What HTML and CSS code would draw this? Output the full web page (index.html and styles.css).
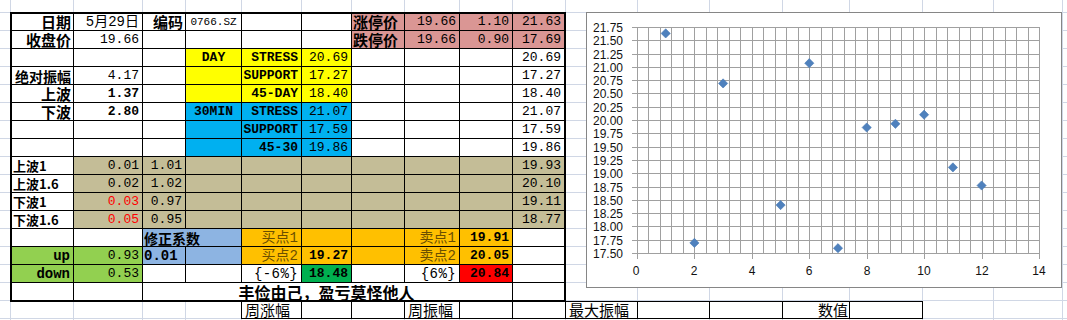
FILE: index.html
```html
<!DOCTYPE html>
<html lang="zh-CN">
<head>
<meta charset="utf-8">
<title>5月29日 0766.SZ</title>
<link rel="stylesheet" href="styles.css">
</head>
<body>
<div class="page">
  <div class="sheet">
    <div class="tbl">
      <!-- row 1 -->
      <div class="c lbl">日期</div>
      <div class="c date">5月29日</div>
      <div class="c lbl">编码</div>
      <div class="c code">0766.SZ</div>
      <div class="c"></div>
      <div class="c"></div>
      <div class="c lbl l pk">涨停价</div>
      <div class="c pk">19.66</div>
      <div class="c pk">1.10</div>
      <div class="c pk">21.63</div>
      <!-- row 2 -->
      <div class="c lbl">收盘价</div>
      <div class="c">19.66</div>
      <div class="c"></div>
      <div class="c"></div>
      <div class="c"></div>
      <div class="c"></div>
      <div class="c lbl l pk">跌停价</div>
      <div class="c pk">19.66</div>
      <div class="c pk">0.90</div>
      <div class="c pk">17.69</div>
      <!-- row 3 -->
      <div class="c"></div>
      <div class="c"></div>
      <div class="c"></div>
      <div class="c b ctr yl">DAY</div>
      <div class="c b yl">STRESS</div>
      <div class="c yl">20.69</div>
      <div class="c"></div>
      <div class="c"></div>
      <div class="c"></div>
      <div class="c">20.69</div>
      <!-- row 4 -->
      <div class="c lbl sm14">绝对振幅</div>
      <div class="c">4.17</div>
      <div class="c"></div>
      <div class="c yl"></div>
      <div class="c b yl">SUPPORT</div>
      <div class="c yl">17.27</div>
      <div class="c"></div>
      <div class="c"></div>
      <div class="c"></div>
      <div class="c">17.27</div>
      <!-- row 5 -->
      <div class="c lbl">上波</div>
      <div class="c b">1.37</div>
      <div class="c"></div>
      <div class="c yl"></div>
      <div class="c b yl">45-DAY</div>
      <div class="c yl">18.40</div>
      <div class="c"></div>
      <div class="c"></div>
      <div class="c"></div>
      <div class="c">18.40</div>
      <!-- row 6 -->
      <div class="c lbl">下波</div>
      <div class="c b">2.80</div>
      <div class="c"></div>
      <div class="c b ctr bl">30MIN</div>
      <div class="c b bl">STRESS</div>
      <div class="c bl">21.07</div>
      <div class="c"></div>
      <div class="c"></div>
      <div class="c"></div>
      <div class="c">21.07</div>
      <!-- row 7 -->
      <div class="c"></div>
      <div class="c"></div>
      <div class="c"></div>
      <div class="c bl"></div>
      <div class="c b bl">SUPPORT</div>
      <div class="c bl">17.59</div>
      <div class="c"></div>
      <div class="c"></div>
      <div class="c"></div>
      <div class="c">17.59</div>
      <!-- row 8 -->
      <div class="c"></div>
      <div class="c"></div>
      <div class="c"></div>
      <div class="c bl"></div>
      <div class="c b bl">45-30</div>
      <div class="c bl">19.86</div>
      <div class="c"></div>
      <div class="c"></div>
      <div class="c"></div>
      <div class="c">19.86</div>
      <!-- row 9 -->
      <div class="c lbl small l">上波1</div>
      <div class="c tn">0.01</div>
      <div class="c tn">1.01</div>
      <div class="c tn"></div>
      <div class="c tn"></div>
      <div class="c tn"></div>
      <div class="c tn"></div>
      <div class="c tn"></div>
      <div class="c tn"></div>
      <div class="c tn">19.93</div>
      <!-- row 10 -->
      <div class="c lbl small l">上波1.6</div>
      <div class="c tn">0.02</div>
      <div class="c tn">1.02</div>
      <div class="c tn"></div>
      <div class="c tn"></div>
      <div class="c tn"></div>
      <div class="c tn"></div>
      <div class="c tn"></div>
      <div class="c tn"></div>
      <div class="c tn">20.10</div>
      <!-- row 11 -->
      <div class="c lbl small l">下波1</div>
      <div class="c tn red-t">0.03</div>
      <div class="c tn">0.97</div>
      <div class="c tn"></div>
      <div class="c tn"></div>
      <div class="c tn"></div>
      <div class="c tn"></div>
      <div class="c tn"></div>
      <div class="c tn"></div>
      <div class="c tn">19.11</div>
      <!-- row 12 -->
      <div class="c lbl small l">下波1.6</div>
      <div class="c tn red-t">0.05</div>
      <div class="c tn">0.95</div>
      <div class="c tn"></div>
      <div class="c tn"></div>
      <div class="c tn"></div>
      <div class="c tn"></div>
      <div class="c tn"></div>
      <div class="c tn"></div>
      <div class="c tn">18.77</div>
      <!-- row 13 -->
      <div class="c"></div>
      <div class="c"></div>
      <div class="c lbl sm14 l lb span2">修正系数</div>
      <div class="c cjk or brn">买点1</div>
      <div class="c or"></div>
      <div class="c or"></div>
      <div class="c cjk or brn">卖点1</div>
      <div class="c b or">19.91</div>
      <div class="c"></div>
      <!-- row 14 -->
      <div class="c b big gr">up</div>
      <div class="c gr">0.93</div>
      <div class="c b big l lb">0.01</div>
      <div class="c lb"></div>
      <div class="c cjk or brn">买点2</div>
      <div class="c b or">19.27</div>
      <div class="c or"></div>
      <div class="c cjk or brn">卖点2</div>
      <div class="c b or">20.05</div>
      <div class="c"></div>
      <!-- row 15 -->
      <div class="c b big gr">down</div>
      <div class="c gr">0.53</div>
      <div class="c"></div>
      <div class="c"></div>
      <div class="c pct">{-6%}</div>
      <div class="c b dg">18.48</div>
      <div class="c"></div>
      <div class="c pct">{6%}</div>
      <div class="c b rd">20.84</div>
      <div class="c"></div>
      <!-- row 16 -->
      <div class="c"></div>
      <div class="c"></div>
      <div class="c lbl motto ctr span7">丰俭由己，盈亏莫怪他人</div>
      <div class="c"></div>
    </div>
    <div class="week">
      <div class="w w-e first">周涨幅</div>
      <div class="w w-f"></div>
      <div class="w w-g"></div>
      <div class="w w-h">周振幅</div>
      <div class="w w-i"></div>
      <div class="w w-j"></div>
      <div class="w w-k">最大振幅</div>
      <div class="w w-l"></div>
      <div class="w w-m"></div>
      <div class="w w-n r">数值</div>
      <div class="w w-o"></div>
    </div>
  </div>

  <div class="chart">
    <svg class="plot" width="474" height="274" viewBox="0 0 474 274" xmlns="http://www.w3.org/2000/svg">
      <defs>
        <path id="dm" d="M0 -4.6L4.6 0L0 4.6L-4.6 0Z"/>
      </defs>
      <path class="grid" d="M50.5 14V241M61.5 14V241M73.5 14V241M84.5 14V241M96.5 14V241M107.5 14V241M119.5 14V241M130.5 14V241M142.5 14V241M153.5 14V241M165.5 14V241M176.5 14V241M188.5 14V241M199.5 14V241M211.5 14V241M222.5 14V241M234.5 14V241M245.5 14V241M257.5 14V241M268.5 14V241M280.5 14V241M291.5 14V241M303.5 14V241M314.5 14V241M326.5 14V241M337.5 14V241M349.5 14V241M360.5 14V241M372.5 14V241M383.5 14V241M395.5 14V241M406.5 14V241M418.5 14V241M429.5 14V241M441.5 14V241M452.5 14V241"/>
      <path class="grid" d="M45 14.5H453M45 27.5H453M45 41.5H453M45 54.5H453M45 67.5H453M45 80.5H453M45 94.5H453M45 107.5H453M45 120.5H453M45 134.5H453M45 147.5H453M45 160.5H453M45 174.5H453M45 187.5H453M45 200.5H453M45 213.5H453M45 227.5H453M45 240.5H453"/>
      <path class="grid" d="M50.5 240V246M107.5 240V246M165.5 240V246M222.5 240V246M280.5 240V246M337.5 240V246M395.5 240V246M452.5 240V246"/>
      <g class="ylab">
        <text x="36" y="18.5">21.75</text>
        <text x="36" y="31.5">21.50</text>
        <text x="36" y="45.5">21.25</text>
        <text x="36" y="58.5">21.00</text>
        <text x="36" y="71.5">20.75</text>
        <text x="36" y="84.5">20.50</text>
        <text x="36" y="98.5">20.25</text>
        <text x="36" y="111.5">20.00</text>
        <text x="36" y="124.5">19.75</text>
        <text x="36" y="138.5">19.50</text>
        <text x="36" y="151.5">19.25</text>
        <text x="36" y="164.5">19.00</text>
        <text x="36" y="178.5">18.75</text>
        <text x="36" y="191.5">18.50</text>
        <text x="36" y="204.5">18.25</text>
        <text x="36" y="217.5">18.00</text>
        <text x="36" y="231.5">17.75</text>
        <text x="36" y="244.5">17.50</text>
      </g>
      <g class="xlab">
        <text x="49" y="262">0</text>
        <text x="107" y="262">2</text>
        <text x="165" y="262">4</text>
        <text x="222" y="262">6</text>
        <text x="280" y="262">8</text>
        <text x="337" y="262">10</text>
        <text x="395" y="262">12</text>
        <text x="452" y="262">14</text>
      </g>
      <g class="pts">
        <use href="#dm" x="78.7" y="20.4"/>
        <use href="#dm" x="107.4" y="229.9"/>
        <use href="#dm" x="136.1" y="70.4"/>
        <use href="#dm" x="193.6" y="192.1"/>
        <use href="#dm" x="222.3" y="50.2"/>
        <use href="#dm" x="251.0" y="235.2"/>
        <use href="#dm" x="279.7" y="114.5"/>
        <use href="#dm" x="308.4" y="110.8"/>
        <use href="#dm" x="337.1" y="101.7"/>
        <use href="#dm" x="365.9" y="154.4"/>
        <use href="#dm" x="394.6" y="172.5"/>
      </g>
    </svg>
  </div>
</div>
</body>
</html>
```
FILE: styles.css
```css
html, body {
  margin: 0;
  padding: 0;
  background: #fff;
}

.page {
  position: relative;
  width: 1067px;
  height: 320px;
  overflow: hidden;
  background-color: #fff;
  background-image:
    linear-gradient(#d0d7e5, #d0d7e5),
    linear-gradient(#d0d7e5, #d0d7e5),
    linear-gradient(#d0d7e5, #d0d7e5),
    linear-gradient(#d0d7e5, #d0d7e5),
    linear-gradient(#d0d7e5, #d0d7e5),
    linear-gradient(#d0d7e5, #d0d7e5),
    linear-gradient(#d0d7e5, #d0d7e5),
    linear-gradient(#d0d7e5, #d0d7e5),
    linear-gradient(#d0d7e5, #d0d7e5),
    linear-gradient(#d0d7e5, #d0d7e5),
    linear-gradient(#d0d7e5, #d0d7e5),
    linear-gradient(#d0d7e5, #d0d7e5),
    linear-gradient(#d0d7e5, #d0d7e5),
    linear-gradient(#d0d7e5, #d0d7e5),
    linear-gradient(#d0d7e5, #d0d7e5),
    linear-gradient(#d0d7e5, #d0d7e5),
    linear-gradient(#d0d7e5, #d0d7e5),
    linear-gradient(#d0d7e5, #d0d7e5),
    linear-gradient(to bottom, #d0d7e5 1px, transparent 1px);
  background-size:
    1px 100%, 1px 100%, 1px 100%, 1px 100%, 1px 100%, 1px 100%,
    1px 100%, 1px 100%, 1px 100%, 1px 100%, 1px 100%, 1px 100%,
    1px 100%, 1px 100%, 1px 100%, 1px 100%, 1px 100%, 1px 100%,
    100% 18px;
  background-position:
    10px 0, 73px 0, 142px 0, 185px 0, 241px 0, 301px 0,
    351px 0, 404px 0, 459px 0, 512px 0, 565px 0, 637px 0,
    709px 0, 782px 0, 849px 0, 922px 0, 993px 0, 1062px 0,
    0 12px;
  background-repeat:
    no-repeat, no-repeat, no-repeat, no-repeat, no-repeat, no-repeat,
    no-repeat, no-repeat, no-repeat, no-repeat, no-repeat, no-repeat,
    no-repeat, no-repeat, no-repeat, no-repeat, no-repeat, no-repeat,
    repeat;
}

.sheet {
  padding: 12px 0 0 10px;
}

/* ---------- main table ---------- */
.tbl {
  display: grid;
  grid-template-columns: 61px 68px 42px 55px 59px 49px 52px 54px 52px 51px;
  grid-template-rows: 16px repeat(15, 17px);
  gap: 1px;
  width: max-content;
  background: #000;
  border: 2px solid #000;
}

.c {
  display: flex;
  align-items: center;
  justify-content: flex-end;
  min-width: 0;
  padding: 0 3px 0 1px;
  background: #fff;
  color: #000;
  font-family: "Liberation Mono", "Noto Sans CJK SC", monospace;
  font-size: 13px;
  line-height: 16px;
  white-space: nowrap;
  overflow: visible;
}

.l { justify-content: flex-start; }
.ctr { justify-content: center; padding: 0; }
.b { font-weight: 700; }
.big { font-size: 14px; }

.lbl {
  font-family: "Noto Sans CJK SC", sans-serif;
  font-weight: 700;
  font-size: 15px;
  line-height: 16px;
  padding-right: 2px;
}
.sm14 { font-size: 14px; }
.small { font-size: 13px; }
.motto { font-size: 16px; }
.cjk {
  font-family: "Liberation Mono", "Noto Sans CJK SC", monospace;
  font-size: 14px;
  padding-right: 3px;
}
.date { font-size: 14px; }
.code { font-size: 11px; justify-content: center; padding: 0; }
.pct { font-size: 14px; letter-spacing: 0.4px; }

.span2 { grid-column: span 2; }
.span7 { grid-column: span 7; }

/* fills */
.pk { background: #da9694; }
.yl { background: #ffff00; }
.bl { background: #00b0f0; }
.tn { background: #c4bd97; }
.or { background: #ffc000; }
.gr { background: #92d050; }
.lb { background: #8db4e2; }
.dg { background: #00b050; }
.rd { background: #ff0000; }

/* text colours */
.red-t { color: #ff0000; }
.brn { color: #6b4f00; }

/* ---------- week row below the table ---------- */
.week {
  display: flex;
  margin: -1px 0 0 231px;
}

.w {
  box-sizing: border-box;
  height: 18px;
  border-top: 1px solid #000;
  border-right: 1px solid #000;
  border-bottom: 1px solid #000;
  background: #fff;
  font-family: "Noto Sans CJK SC", sans-serif;
  font-size: 15px;
  line-height: 16px;
  padding-left: 3px;
  white-space: nowrap;
  display: flex;
  align-items: center;
}
.w.first { border-left: 1px solid #000; }
.w.r { justify-content: flex-end; padding: 0 1px 0 0; }

.w-e { width: 61px; }
.w-f { width: 50px; }
.w-g { width: 53px; }
.w-h { width: 55px; }
.w-i { width: 53px; }
.w-j { width: 53px; }
.w-k { width: 72px; }
.w-l { width: 72px; }
.w-m { width: 73px; }
.w-n { width: 67px; }
.w-o { width: 73px; }

/* ---------- scatter chart ---------- */
.chart {
  position: absolute;
  left: 586px;
  top: 12px;
  width: 476px;
  height: 276px;
  box-sizing: border-box;
  border: 1px solid #868686;
  background: #fff;
}

.plot { display: block; }

.grid {
  fill: none;
  stroke: #a0a0a0;
  stroke-width: 1;
}

.ylab text,
.xlab text {
  font-family: "Liberation Sans", Arial, sans-serif;
  font-size: 12px;
  fill: #111;
}
.ylab text { text-anchor: end; }
.xlab text { text-anchor: middle; }

.pts use {
  fill: #4f81bd;
  stroke: #4778b3;
  stroke-width: 0.6;
}
```
